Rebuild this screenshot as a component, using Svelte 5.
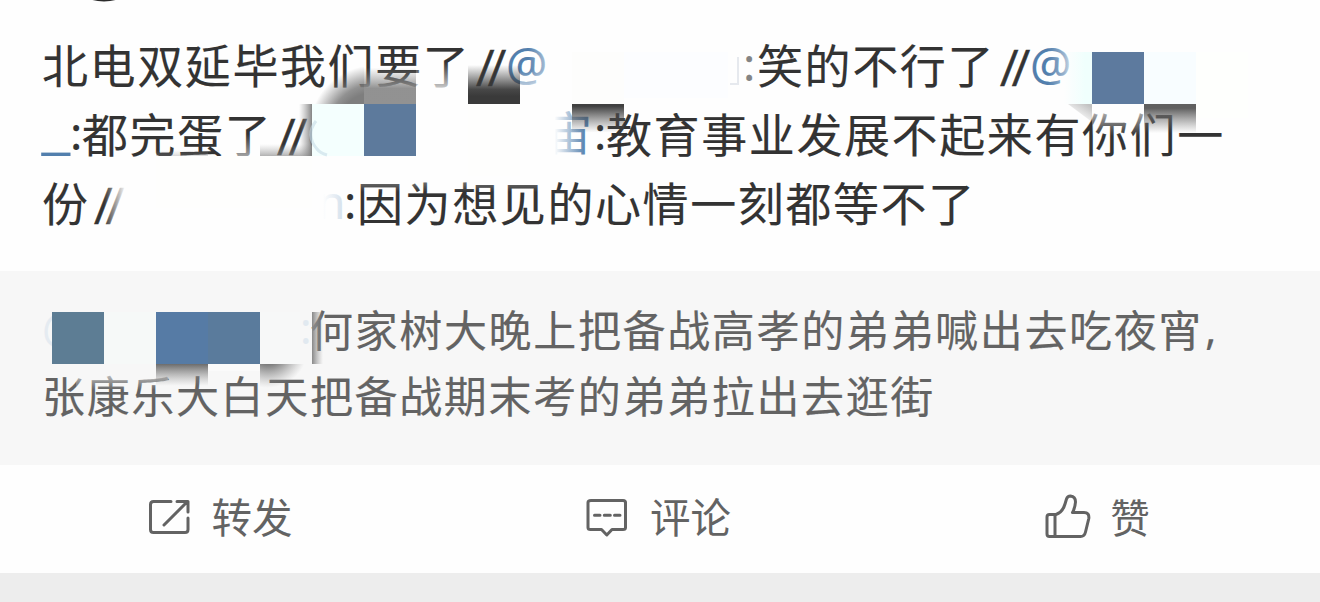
<script lang="ts">
	type Run = { text: string; width: number; kind?: 'slash' | 'latin' | 'link' | 'rule' | 'faded' };

	// Each line is a row of runs, wide runs leave room for hidden user names
	const comment: Run[][] = [
		[
			{ text: '北电双延毕我们要了', width: 434 },
			{ text: '//', width: 30, kind: 'slash' },
			{ text: '@', width: 237, kind: 'link' },
			{ text: ':', width: 14, kind: 'latin' },
			{ text: '笑的不行了', width: 243 },
			{ text: '//', width: 30, kind: 'slash' },
			{ text: '@', width: 60, kind: 'link' }
		],
		[
			{ text: '_', width: 28, kind: 'rule' },
			{ text: ':', width: 12, kind: 'latin' },
			{ text: '都完蛋了', width: 195 },
			{ text: '//', width: 30, kind: 'slash' },
			{ text: '@', width: 239, kind: 'link' },
			{ text: '宙', width: 48, kind: 'link' },
			{ text: ':', width: 12, kind: 'latin' },
			{ text: '教育事业发展不起来有你们一', width: 620 }
		],
		[
			{ text: '份', width: 52 },
			{ text: '//', width: 223, kind: 'slash' },
			{ text: 'n', width: 27, kind: 'faded' },
			{ text: ':', width: 13, kind: 'latin' },
			{ text: '因为想见的心情一刻都等不了', width: 620 }
		]
	];

	const quote: Run[][] = [
		[
			{ text: '@', width: 258, kind: 'faded' },
			{ text: ':', width: 10, kind: 'faded' },
			{ text: '何家树大晚上把备战高孝的弟弟喊出去吃夜宵', width: 895 },
			{ text: ',', width: 20, kind: 'latin' }
		],
		[{ text: '张康乐大白天把备战期末考的弟弟拉出去逛街', width: 900 }]
	];
</script>

{#snippet lines(rows: Run[][])}
	{#each rows as row}
		<div class="line">
			{#each row as run}
				<span class="run {run.kind ?? ''}" style:width="{run.width}px">{run.text}</span>
			{/each}
		</div>
	{/each}
{/snippet}

<main class="post">
	<section class="comment">
		{@render lines(comment)}
		<svg class="mosaic" width="1320" height="271" viewBox="0 0 1320 271" aria-hidden="true">
			<defs>
				<linearGradient id="rise" x1="0" y1="0" x2="0" y2="1">
					<stop offset="0.25" stop-color="#3a3a3a" stop-opacity="0" />
					<stop offset="0.72" stop-color="#3a3a3a" stop-opacity="0.93" />
					<stop offset="0.85" stop-color="#3a3a3a" />
				</linearGradient>
				<linearGradient id="fall" x1="0" y1="0" x2="0" y2="1">
					<stop offset="0.04" stop-color="#404040" />
					<stop offset="0.55" stop-color="#606060" stop-opacity="0" />
				</linearGradient>
				<linearGradient id="fallSoft" x1="0" y1="0" x2="0" y2="1">
					<stop offset="0.08" stop-color="#606060" />
					<stop offset="0.56" stop-color="#808080" stop-opacity="0" />
				</linearGradient>
				<linearGradient id="shadeUp" x1="0" y1="1" x2="0" y2="0">
					<stop offset="0" stop-color="#929292" />
					<stop offset="0.3" stop-color="#8c8c8c" stop-opacity="0.95" />
					<stop offset="0.7" stop-color="#999" stop-opacity="0" />
				</linearGradient>
				<radialGradient id="shadeCorner" gradientUnits="userSpaceOnUse" cx="374" cy="130" r="68">
					<stop offset="0.55" stop-color="#7e7e7e" />
					<stop offset="0.67" stop-color="#7e7e7e" stop-opacity="0.85" />
					<stop offset="0.95" stop-color="#7e7e7e" stop-opacity="0" />
				</radialGradient>
				<linearGradient id="shadeSmall" x1="0" y1="1" x2="0.8" y2="0">
					<stop offset="0.3" stop-color="#999" stop-opacity="0" />
					<stop offset="1" stop-color="#999" stop-opacity="0.6" />
				</linearGradient>
				<linearGradient id="shadeLeft" x1="1" y1="0" x2="0" y2="0">
					<stop offset="0" stop-color="#777" stop-opacity="0.9" />
					<stop offset="1" stop-color="#999" stop-opacity="0" />
				</linearGradient>
				<linearGradient id="foot" x1="0" y1="1" x2="0" y2="0">
					<stop offset="0" stop-color="#888" stop-opacity="0.65" />
					<stop offset="1" stop-color="#aaa" stop-opacity="0" />
				</linearGradient>
				<linearGradient id="cyan">
					<stop offset="0" stop-color="#f0fffd" stop-opacity="0" />
					<stop offset="0.75" stop-color="#f0fffd" />
				</linearGradient>
				<linearGradient id="whiteUp" x1="0" y1="1" x2="0" y2="0">
					<stop offset="0" stop-color="#fefefe" stop-opacity="0.85" />
					<stop offset="1" stop-color="#fefefe" stop-opacity="0" />
				</linearGradient>
				<linearGradient id="whiteDown" x1="0" y1="0" x2="0" y2="1">
					<stop offset="0" stop-color="#fefefe" stop-opacity="0.8" />
					<stop offset="1" stop-color="#fefefe" stop-opacity="0" />
				</linearGradient>
				<linearGradient id="whiteRight">
					<stop offset="0" stop-color="#fefefe" stop-opacity="0" />
					<stop offset="1" stop-color="#fefefe" />
				</linearGradient>
				<linearGradient id="whiteLeft" x1="1" y1="0" x2="0" y2="0">
					<stop offset="0" stop-color="#fefefe" stop-opacity="0" />
					<stop offset="0.75" stop-color="#fefefe" />
				</linearGradient>
			</defs>

			<!-- bottom of the avatar above -->
			<ellipse cx="104" cy="-5" rx="18" ry="6.5" fill="#2b2b2b" />

			<rect x="416" y="62" width="52" height="30" fill="url(#whiteUp)" />
			<rect x="520" y="70" width="28" height="22" fill="url(#whiteUp)" />
			<rect x="528" y="44" width="22" height="48" fill="url(#whiteRight)" opacity="0.6" />
			<rect x="572" y="52" width="52" height="52" fill="#fdfdfc" />
			<rect x="624" y="52" width="104" height="46" fill="#fcfdff" />
			<path d="M730 84h8V57" fill="none" stroke="#aeb8ca" stroke-opacity="0.3" stroke-width="2" />
			<rect x="740" y="52" width="16" height="40" fill="#fefefe" opacity="0.4" />
			<rect x="468" y="52" width="52" height="52" fill="url(#rise)" />
			<rect x="312" y="52" width="52" height="52" fill="url(#shadeCorner)" />
			<rect x="364" y="52" width="52" height="52" fill="url(#shadeUp)" />

			<rect x="1048" y="42" width="24" height="50" fill="url(#whiteRight)" opacity="0.6" />
			<rect x="1064" y="52" width="28" height="52" fill="url(#cyan)" />
			<rect x="1092" y="52" width="52" height="52" fill="#5d7a9e" />
			<rect x="1144" y="52" width="52" height="52" fill="#f8fdff" />
			<rect x="1196" y="52" width="52" height="66" fill="#fefffd" />
			<path d="M1068 104h24v18z" fill="url(#shadeSmall)" />
			<rect x="1092" y="104" width="52" height="32" fill="url(#whiteDown)" />
			<rect x="1144" y="104" width="52" height="52" fill="url(#fallSoft)" />

			<rect x="226" y="134" width="34" height="24" fill="url(#whiteUp)" opacity="0.7" />
			<rect x="156" y="150" width="52" height="6" fill="url(#foot)" opacity="0.5" />
			<rect x="260" y="144" width="52" height="12" fill="url(#foot)" />
			<rect x="299" y="104" width="13" height="52" fill="url(#shadeLeft)" />
			<rect x="312" y="104" width="52" height="56" fill="#fefefe" />
			<rect x="312" y="104" width="52" height="52" fill="#f4fffe" />
			<path d="M316 121Q305 135 317 149Q320 153 327 155" fill="none" stroke="#c6dce6" stroke-width="3" opacity="0.6" />
			<rect x="364" y="104" width="52" height="52" fill="#5d7a9c" />
			<rect x="468" y="104" width="52" height="72" fill="#fefefd" />
			<rect x="544" y="108" width="42" height="52" fill="url(#whiteLeft)" />
			<rect x="572" y="104" width="52" height="52" fill="url(#fall)" />

			<rect x="104" y="180" width="22" height="54" fill="url(#whiteRight)" />
			<rect x="156" y="156" width="156" height="52" fill="#fefefd" />
			<rect x="316" y="180" width="28" height="46" fill="url(#whiteLeft)" />
			<rect x="357" y="178" width="186" height="14" fill="url(#whiteDown)" opacity="0.5" />
		</svg>
	</section>

	<section class="quote">
		{@render lines(quote)}
		<svg class="mosaic" width="1320" height="194" viewBox="0 271 1320 194" aria-hidden="true">
			<defs>
				<linearGradient id="qFall" x1="0" y1="0" x2="0" y2="1">
					<stop offset="0" stop-color="#6c6c6c" />
					<stop offset="0.42" stop-color="#999" stop-opacity="0" />
				</linearGradient>
				<radialGradient id="qCorner" gradientUnits="userSpaceOnUse" cx="268" cy="348" r="42">
					<stop offset="0.3" stop-color="#606060" />
					<stop offset="0.95" stop-color="#999" stop-opacity="0" />
				</radialGradient>
				<linearGradient id="qSide">
					<stop offset="0" stop-color="#888" />
					<stop offset="1" stop-color="#aaa" stop-opacity="0" />
				</linearGradient>
				<linearGradient id="qFade" x1="0" y1="0" x2="0" y2="1">
					<stop offset="0" stop-color="#f7f7f7" stop-opacity="0.8" />
					<stop offset="1" stop-color="#f7f7f7" stop-opacity="0" />
				</linearGradient>
			</defs>
			<rect x="76" y="370" width="92" height="20" fill="url(#qFade)" />
			<rect x="42" y="312" width="10" height="52" fill="#f7f7f7" opacity="0.5" />
			<rect x="52" y="312" width="52" height="52" fill="#5d7d94" />
			<rect x="104" y="312" width="52" height="52" fill="#f6f9f8" />
			<rect x="156" y="312" width="52" height="52" fill="#567ba5" />
			<rect x="208" y="312" width="52" height="52" fill="#5a7b9c" />
			<rect x="260" y="312" width="40" height="52" fill="#f7f8f8" />
			<rect x="300" y="312" width="10" height="52" fill="#f7f8f8" opacity="0.4" />
			<rect x="156" y="364" width="52" height="52" fill="url(#qFall)" />
			<rect x="208" y="364" width="52" height="7" fill="#fafafa" />
			<rect x="260" y="364" width="52" height="38" fill="url(#qCorner)" />
			<rect x="312" y="312" width="11" height="52" fill="url(#qSide)" />
		</svg>
	</section>

	<footer class="actions">
		<button class="action share">
			<svg width="46" height="48" viewBox="0 0 46 48" aria-hidden="true">
				<path d="M25 9.5H7.5Q4.5 9.5 4.5 12.5V37.5Q4.5 40.5 7.5 40.5H39Q42 40.5 42 37.5V26" />
				<path d="M18 33 41 10M31 9.5H42V20" />
			</svg>
			<span>转发</span>
		</button>
		<button class="action reply">
			<svg width="46" height="48" viewBox="0 0 46 48" aria-hidden="true">
				<path d="M7 8.5H39Q41.5 8.5 41.5 10.5V35.5Q41.5 37.5 39 37.5H28L22.8 43L17.5 37.5H6.5Q4 37.5 4 35.5V10.5Q4 8.5 7 8.5Z" />
				<path d="M10.5 23.3H16M20.3 23.3H26.3M30.5 23.3H36" />
			</svg>
			<span>评论</span>
		</button>
		<button class="action like">
			<svg width="50" height="48" viewBox="0 0 50 48" aria-hidden="true">
				<path d="M7.5 22.5H14Q20.5 20.5 23 12L24.5 7Q25.5 4 28.5 4Q33.5 4.5 33.5 10Q33 16 30.5 20.5H42Q47.5 20.5 46.8 26.5L43.5 40Q42.5 44.5 38.5 44.5H7.5Q5 44.5 5 42V25Q5 22.5 7.5 22.5ZM13 22.8V44.5" />
			</svg>
			<span>赞</span>
		</button>
	</footer>
</main>

<style>
	:global(body) {
		margin: 0;
		background: #ededed;
	}

	.post {
		width: 1320px;
		height: 602px;
		overflow: hidden;
		font-family: 'Noto Sans CJK SC', sans-serif;
		background: #ededed;
	}

	.comment,
	.quote {
		position: relative;
		box-sizing: border-box;
		overflow: hidden;
		padding-left: 42px;
		-webkit-text-stroke: 0.15px currentColor;
	}

	.comment {
		height: 271px;
		padding-top: 29px;
		font-size: 46px;
		letter-spacing: 1.6px;
		line-height: 69px;
		color: #333;
		background: #fefefe;
	}

	.quote {
		height: 194px;
		padding-top: 24px;
		font-size: 43px;
		letter-spacing: 1.65px;
		line-height: 66px;
		color: #636363;
		background: #f7f7f7;
	}

	.line {
		display: flex;
		height: 1lh;
		white-space: nowrap;
	}

	.run {
		flex: none;
	}

	.latin,
	.link,
	.faded {
		font-family: 'Noto Sans', 'Noto Sans CJK SC', sans-serif;
		letter-spacing: 0;
	}

	.slash {
		padding-top: 3px;
		box-sizing: border-box;
		font-family: Roboto, sans-serif;
		font-size: 47px;
		letter-spacing: -2.6px;
		-webkit-text-stroke: 0.6px currentColor;
	}

	.link,
	.rule {
		color: #527fad;
	}

	.rule {
		position: relative;
		top: -3px;
		font-family: 'Liberation Sans', sans-serif;
		font-size: 50px;
		letter-spacing: 0;
	}

	.faded {
		color: #d3dfeb;
	}

	.mosaic {
		position: absolute;
		inset: 0;
	}

	.actions {
		display: grid;
		grid-template-columns: 440px 440px 440px;
		height: 108px;
		background: #fefefe;
	}

	.action {
		display: flex;
		align-items: center;
		justify-content: center;
		gap: 20px;
		padding: 0 2px 6px 0;
		border: 0;
		background: none;
		font: 40.5px/60px 'Noto Sans CJK SC', sans-serif;
		color: #636363;
	}

	.reply {
		padding-right: 5px;
	}

	.like {
		gap: 18px;
		padding-right: 8px;
		font-size: 39.5px;
	}

	.action svg {
		fill: none;
		stroke: #636363;
		stroke-width: 3;
		stroke-linecap: round;
		stroke-linejoin: round;
	}
</style>
